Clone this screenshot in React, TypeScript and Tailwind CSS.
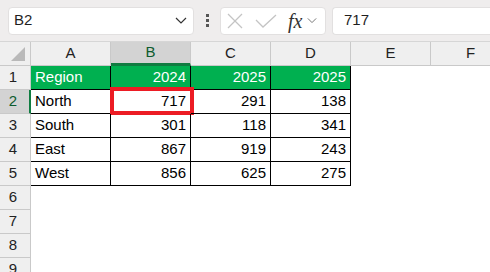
import React from 'react'

const cols = ['A', 'B', 'C', 'D', 'E', 'F']

const data: string[][] = [
    ['Region', '2024', '2025', '2025'],
    ['North', '717', '291', '138'],
    ['South', '301', '118', '341'],
    ['East', '867', '919', '243'],
    ['West', '856', '625', '275'],
]

function Chevron({ className }: { className?: string }) {
    return (
        <svg width="12" height="7" viewBox="0 0 12 7" className={className}>
            <polyline points="1,1 6,6 11,1" fill="none" stroke="currentColor" strokeWidth="1.2" />
        </svg>
    )
}

function TopBar() {
    return (
        <div className="h-[41px] bg-[#efeded] flex items-center pl-[8px] gap-0">
            {/* Name box */}
            <div className="w-[186px] h-[28px] bg-white rounded-[4px] border border-[#e2e0e0] flex items-center justify-between pl-[5px] pr-[6px]">
                <span className="text-[15px] text-[#1f1f1f]">B2</span>
                <Chevron className="text-[#333]" />
            </div>

            {/* vertical dots */}
            <div className="w-[26px] flex flex-col items-center gap-[2px]">
                <span className="w-[3px] h-[3px] bg-[#555]" />
                <span className="w-[3px] h-[3px] bg-[#555]" />
                <span className="w-[3px] h-[3px] bg-[#555]" />
            </div>

            {/* cancel / enter / fx */}
            <div className="w-[106px] h-[28px] bg-white rounded-[4px] border border-[#e2e0e0] flex items-center pl-[5px]">
                <svg width="18" height="18" viewBox="0 0 18 18">
                    <line x1="2" y1="2" x2="16" y2="16" stroke="#c4c4c4" strokeWidth="1.3" />
                    <line x1="16" y1="2" x2="2" y2="16" stroke="#c4c4c4" strokeWidth="1.3" />
                </svg>
                <svg width="22" height="14" viewBox="0 0 22 14" className="ml-[11px]">
                    <polyline points="1,6 8,13 21,1" fill="none" stroke="#c4c4c4" strokeWidth="1.3" />
                </svg>
                <span className="ml-[11px] text-[20px] italic text-[#333] leading-none" style={{ fontFamily: '"Liberation Serif", serif' }}>fx</span>
                <Chevron className="ml-[5px] text-[#777] w-[10px]" />
            </div>

            {/* formula input */}
            <div className="ml-[6px] flex-1 h-[28px] bg-white rounded-l-[4px] border border-r-0 border-[#e2e0e0] flex items-center pl-[11px]">
                <span className="text-[15px] text-[#1f1f1f]">717</span>
            </div>
        </div>
    )
}

function HeaderRow() {
    return (
        <div className="flex h-[25px] border-t border-[#d6d6d6]">
            <div className="w-[31px] shrink-0 bg-[#efefef] border-r border-b border-[#c9c9c9] relative">
                <svg width="16" height="16" viewBox="0 0 16 16" className="absolute right-[4px] bottom-[3px]">
                    <polygon points="15,1 15,15 1,15" fill="#b9b9b9" />
                </svg>
            </div>
            {cols.map((c) => {
                const sel = c === 'B'
                return (
                    <div
                        key={c}
                        className={
                            sel
                                ? 'w-[80px] shrink-0 bg-[#d3d3d3] border-r border-[#c9c9c9] border-b-[3px] border-b-[#107c41] flex items-center justify-center text-[15px] text-[#0e5c2f]'
                                : 'w-[80px] shrink-0 bg-[#efefef] border-r border-b border-[#c9c9c9] flex items-center justify-center text-[15px] text-[#222]'
                        }
                    >
                        {c}
                    </div>
                )
            })}
        </div>
    )
}

function Row({ r }: { r: number }) {
    const row = data[r - 1]
    const sel = r === 2
    return (
        <div className="flex h-[24px]">
            <div
                className={
                    sel
                        ? 'w-[31px] shrink-0 bg-[#d3d3d3] border-b border-[#c9c9c9] border-r-2 border-r-[#107c41] flex items-center justify-center pr-[3px] text-[15px] text-[#0e5c2f]'
                        : 'w-[31px] shrink-0 bg-[#efefef] border-b border-r border-[#c9c9c9] flex items-center justify-center pr-[4px] text-[15px] text-[#222]'
                }
            >
                {r}
            </div>
            {cols.map((c, ci) => {
                const inTable = row && ci < 4
                const value = inTable ? row[ci] : ''
                const header = r === 1 && inTable
                const cls = [
                    'w-[80px] shrink-0 border-r border-b flex items-center px-[4px] text-[15px] relative',
                    inTable ? 'border-black' : 'border-transparent',
                    header ? 'bg-[#00b050] text-white' : 'text-black',
                    ci === 0 ? 'justify-start' : 'justify-end',
                ].join(' ')
                return (
                    <div key={c} className={cls}>
                        {value}
                        {sel && c === 'B' && (
                            <div className="absolute -left-[1px] -top-[3px] w-[84px] h-[28px] border-[4px] border-[#ec1c24]" />
                        )}
                    </div>
                )
            })}
        </div>
    )
}

export default function App() {
    return (
        <div className="w-[490px] h-[272px] overflow-hidden bg-white" style={{ fontFamily: '"Liberation Sans", Arial, sans-serif' }}>
            <TopBar />
            <HeaderRow />
            {[1, 2, 3, 4, 5, 6, 7, 8, 9].map((r) => (
                <Row key={r} r={r} />
            ))}
        </div>
    )
}
